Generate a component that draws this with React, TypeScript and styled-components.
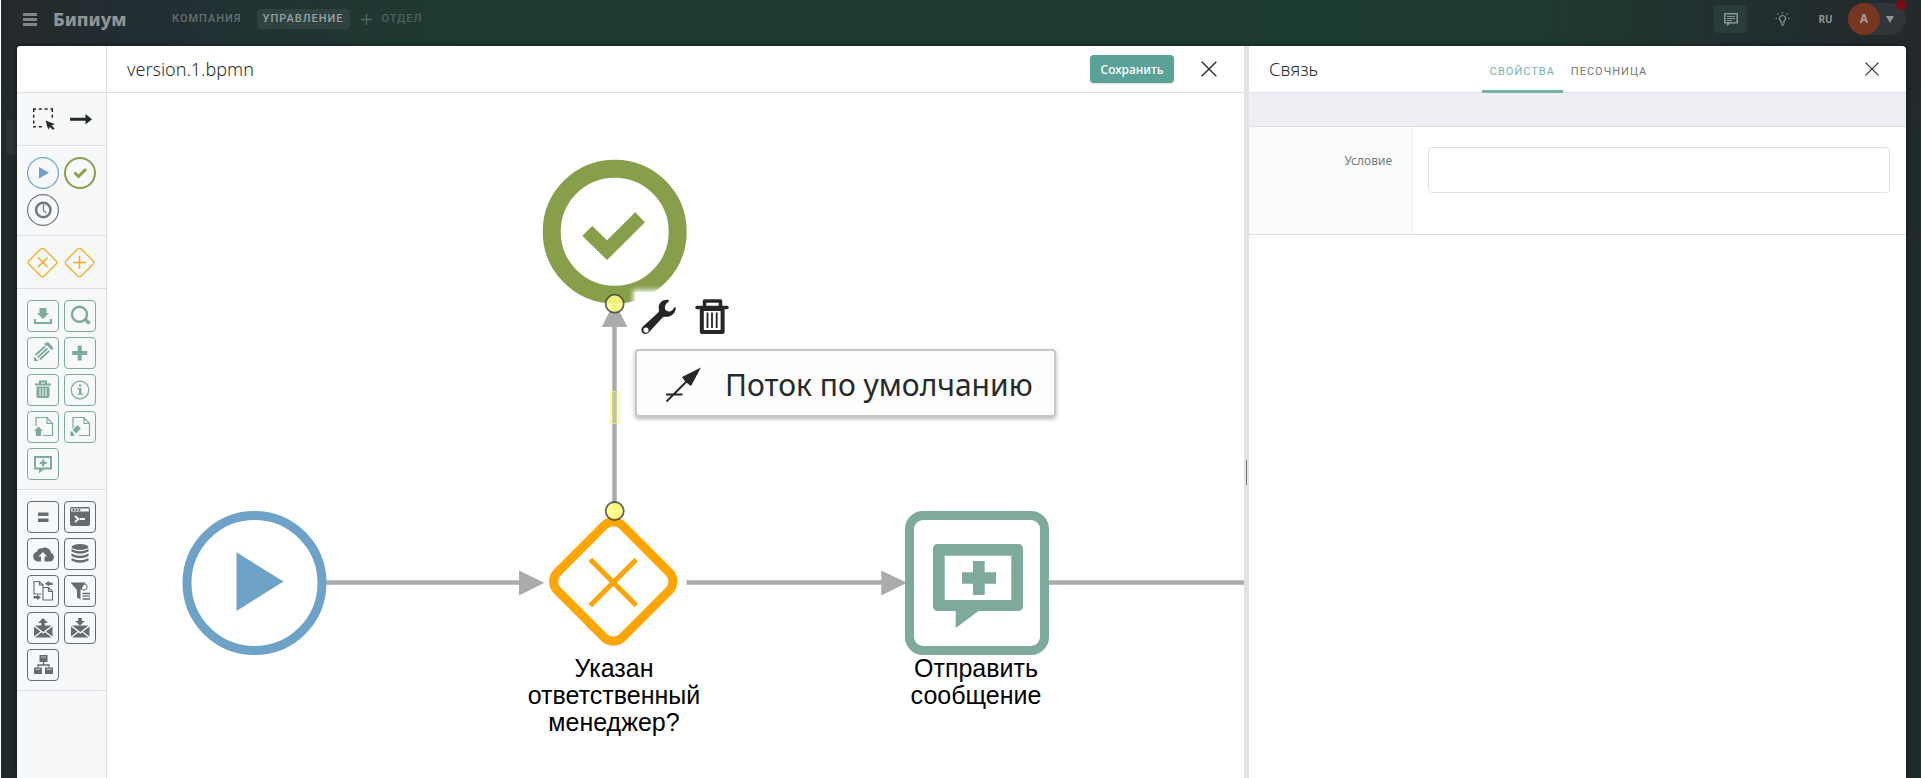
import React from "react";
import styled, { createGlobalStyle } from "styled-components";

const GlobalStyle = createGlobalStyle`
  *, *::before, *::after { box-sizing: border-box; }
  body { margin: 0; background: #fff; color: #2b2f31; font-family: "Noto Sans", sans-serif; }
  button, input { font-family: inherit; margin: 0; padding: 0; }
  button { background: none; border: 0; cursor: pointer; color: inherit; }
  svg { display: block; }
`;

const Page = styled.div`
  display: flex;
  flex-direction: column;
  min-height: 100vh;
  margin-left: 1px;
  position: relative;
  background: linear-gradient(90deg, #24292d 0, #223033 10%, #1e3b31 24%, #1e3d32 70%, #1f3a31 80%, #22302f 90%, #23282c 100%);
`;

const Backdrop = styled.div`
  position: absolute;
  inset: 60px 0 0 0;
  background: linear-gradient(180deg, rgba(32, 44, 44, 0), #202c2c 60px);
`;

const BackTile = styled.div`
  position: absolute;
  left: 5px;
  top: 120px;
  width: 20px;
  height: 35px;
  border-radius: 4px;
  background: #2c3437;
`;

const TopBar = styled.header`
  display: flex;
  align-items: center;
  height: 46px;
  padding: 0 15px 8px 22px;
  color: #8c9493;
`;

const MenuButton = styled.button`
  display: flex;
  color: #7f8686;
`;

const Logo = styled.a`
  margin: 0 39px 0 16px;
  width: 74px;
  font: 800 18px/24px "Noto Sans", sans-serif;
  color: #8f9495;
  text-decoration: none;
`;

const Nav = styled.nav`
  display: flex;
  align-items: center;
`;

const NavLink = styled.a<{ $active?: boolean }>`
  padding: 0 6px;
  margin-right: 9px;
  height: 20px;
  border-radius: 4px;
  font-family: Roboto, "Noto Sans", sans-serif;
  font-size: 11px;
  line-height: 20px;
  font-weight: 500;
  letter-spacing: 1px;
  text-decoration: none;
  color: ${(p) => (p.$active ? "#9ba3a1" : "#66716f")};
  background: ${(p) => (p.$active ? "#2f4240" : "transparent")};
`;

const AddLink = styled(NavLink)`
  display: flex;
  align-items: center;
  gap: 10px;
  padding: 0 2px;
  color: #4f625d;
`;

const Tools = styled.div`
  display: flex;
  align-items: center;
  margin-left: auto;
  height: 38px;
`;

const ChatButton = styled.button`
  display: grid;
  place-items: center;
  width: 33px;
  height: 28px;
  border-radius: 4px;
  background: #2b3d3a;
`;

const HintButton = styled.button`
  margin-left: 28px;
`;

const Language = styled.button`
  width: 58px;
  padding-left: 13px;
  font-size: 10px;
  font-weight: 700;
  line-height: 16px;
`;

const Account = styled.button`
  position: relative;
  display: flex;
  align-items: center;
  gap: 6px;
  width: 58px;
  height: 32px;
  border-radius: 16px;
  background: #2f3538;
`;

const Avatar = styled.span`
  width: 32px;
  height: 32px;
  border-radius: 50%;
  background: #76361f;
  color: #a59c98;
  font-size: 12px;
  font-weight: 700;
  line-height: 32px;
`;

const Alert = styled.span`
  position: absolute;
  top: -3px;
  right: 0;
  width: 10px;
  height: 10px;
  border-radius: 50%;
  background: #7d0c10;
`;

const Modal = styled.main`
  position: relative;
  flex: 1;
  display: flex;
  margin: 0 15px 0 16px;
  border-radius: 4px 4px 0 0;
  overflow: hidden;
  background: #fff;
  box-shadow: 0 0 6px rgba(0, 0, 0, 0.5);
`;

const Palette = styled.aside`
  flex: 0 0 90px;
  border-right: 1px solid #dcdee1;
  background: #f7f8fa;
`;

const PaletteHead = styled.div`
  height: 47px;
  border-bottom: 1px solid #dcdee1;
  background: #fff;
`;

const Group = styled.div<{ $color: string }>`
  display: flex;
  flex-wrap: wrap;
  gap: 5px;
  padding: 11px 10px 9px;
  border-bottom: 1px solid #dcdee1;
  color: ${(p) => p.$color};
`;

const Tool = styled.button<{ $shape?: "box" | "bare" }>`
  display: grid;
  place-items: center;
  width: 32px;
  height: 32px;
  border-radius: 4px;
  border: ${(p) => (p.$shape === "box" ? "1px solid currentColor" : "0")};
`;

const Editor = styled.section`
  flex: 1 1 0;
  min-width: 0;
  display: flex;
  flex-direction: column;
`;

const Head = styled.div`
  display: flex;
  align-items: center;
  height: 47px;
  padding: 0 27px 0 20px;
  border-bottom: 1px solid #dcdee1;
`;

const Title = styled.h1`
  margin: 0;
  font-size: 18px;
  line-height: 24px;
  font-weight: 300;
`;

const Save = styled.button`
  margin-left: auto;
  margin-right: 27px;
  width: 84px;
  height: 28px;
  border-radius: 4px;
  background: #5ba198;
  color: #fff;
  font-size: 12px;
  font-weight: 500;
  box-shadow: 0 1px 2px rgba(0, 0, 0, 0.15);
`;

const Canvas = styled.div`
  position: relative;
  flex: 1;
  min-height: 640px;
  overflow: hidden;
`;

const Diagram = styled.svg`
  position: absolute;
  left: 0;
  top: 0;
  width: 100%;
  height: 100%;
`;

const NodeLabel = styled.div<{ $x: number; $y: number }>`
  position: absolute;
  left: ${(p) => p.$x}px;
  top: ${(p) => p.$y}px;
  width: 200px;
  font: 25px/27px "Liberation Sans", Arial, sans-serif;
  color: #000;
  text-align: center;
`;

const ContextPad = styled.div`
  position: absolute;
  left: 528px;
  top: 199px;
  display: flex;
  gap: 6px;
`;

const PadButton = styled.button`
  display: grid;
  place-items: center;
  width: 47px;
  height: 49px;
  background: rgba(255, 255, 255, 0.98);
  box-shadow: 0 0 5px 2px #fff;
  color: #262626;
`;

const Popup = styled.div`
  position: absolute;
  left: 528px;
  top: 256px;
  border: 2px solid #c8c8c8;
  border-radius: 4px;
  background: #fdfdfd;
  box-shadow: 0 2px 4px rgba(0, 0, 0, 0.3);
`;

const PopupItem = styled.button`
  display: flex;
  align-items: center;
  gap: 23px;
  height: 64px;
  width: 417px;
  padding: 3px 0 0 28px;
  font-size: 30px;
  line-height: 40px;
  color: #262a2c;
  white-space: nowrap;
`;

const Splitter = styled.div`
  display: flex;
  align-items: center;
  flex: 0 0 5px;
  padding: 0 2px 0 2px;
  background: #e3e3e3;
`;

const Grip = styled.span`
  width: 1px;
  height: 25px;
  margin-bottom: -120px;
  background: #777;
`;

const Panel = styled.section`
  flex: 0 0 657px;
  display: flex;
  flex-direction: column;
`;

const PanelHead = styled(Head)`
  justify-content: space-between;
`;

const Tabs = styled.div`
  display: flex;
  align-self: stretch;
  margin-right: 46px;
`;

const Tab = styled.button<{ $active?: boolean }>`
  height: 47px;
  padding: 6px 8px 0;
  border-bottom: 3px solid ${(p) => (p.$active ? "#79b1a8" : "transparent")};
  font-family: Roboto, "Noto Sans", sans-serif;
  font-size: 11px;
  letter-spacing: 1px;
  color: ${(p) => (p.$active ? "#7ab2a9" : "#777")};
`;

const SubBar = styled.div`
  height: 34px;
  border-bottom: 1px solid #dcdee1;
  background: #eeeff4;
`;

const Field = styled.div`
  display: flex;
  height: 108px;
  border-bottom: 1px solid #dcdee1;
`;

const FieldLabel = styled.label`
  width: 164px;
  padding: 25px 20px 0 0;
  border-right: 1px solid #eeeff3;
  background: #fafbfd;
  font-size: 12px;
  line-height: 18px;
  text-align: right;
  color: #777;
`;

const FieldInput = styled.input`
  flex: 1;
  height: 46px;
  margin: 20px 16px 0 15px;
  padding: 0 10px;
  border: 1px solid #e2e2e4;
  border-radius: 4px;
  font-size: 14px;
`;

const Cross = ({ size = 14 }: { size?: number }) => (
  <svg width={size} height={size} viewBox="0 0 14 14" fill="none" stroke="#333" strokeWidth="1.3">
    <path d="M.6.6l12.8 12.8M13.4.6L.6 13.4" />
  </svg>
);

const Icon = ({ children }: { children: React.ReactNode }) => (
  <svg width="30" height="30" viewBox="1 1 30 30" fill="currentColor">{children}</svg>
);

const BigIcon = ({ children }: { children: React.ReactNode }) => (
  <svg width="32" height="32" viewBox="0 0 32 32" fill="currentColor">{children}</svg>
);

type Item = { name: string; art: React.ReactNode; color?: string };

const line = { fill: "none", stroke: "currentColor" } as const;

const toolItems: Item[] = [
  {
    name: "Выделение",
    art: (
      <>
        <path {...line} strokeWidth="1.500" strokeDasharray="3 2.800" d="M6 5h20M6.700 5v18.500M25.300 5v11M6 22.800h10" />
        <path d="M18.500 16.500l9.300 3.500-3.200 1.500 3 3-1.600 1.500-3-3-1.800 2.500z" />
      </>
    ),
  },
  { name: "Связь", art: <path d="M6 13.800h15.500V10l6.500 5.300-6.500 5.300V16.800H6z" /> },
];

const eventItems: Item[] = [
  {
    name: "Начало",
    color: "#6ea3c7",
    art: (
      <>
        <circle {...line} cx="16" cy="16" r="15.400" strokeWidth="1.200" />
        <path d="M12 10l10 5.800-10 5.800z" />
      </>
    ),
  },
  {
    name: "Завершение",
    color: "#879f4a",
    art: (
      <>
        <circle {...line} cx="16" cy="16" r="15" strokeWidth="2" />
        <path {...line} strokeWidth="3" d="M10.500 15.500l4 4 7.500-7.500" />
      </>
    ),
  },
  {
    name: "Таймер",
    color: "#75787a",
    art: (
      <>
        <circle {...line} cx="16" cy="16" r="15.400" strokeWidth="1.200" />
        <circle {...line} cx="16.300" cy="16" r="7.200" strokeWidth="2.500" />
        <path {...line} strokeWidth="1.300" d="M16.500 10.500v6l2.800 2.500" />
      </>
    ),
  },
];

const gatewayFrame = (
  <rect {...line} x="4.700" y="4.700" width="21.600" height="21.600" rx="2.500" strokeWidth="1.200" transform="rotate(45 15.500 15.500)" />
);

const gatewayItems: Item[] = [
  { name: "Исключающий шлюз", art: <>{gatewayFrame}<path {...line} strokeWidth="1.500" d="M11 10.500l9.500 9.500M20.500 10.500L11 20" /></> },
  { name: "Параллельный шлюз", art: <>{gatewayFrame}<path {...line} strokeWidth="1.500" d="M15.500 9v13M9 15.500h13" /></> },
];

const trashArt = (
  <>
    <path {...line} strokeWidth="2" d="M8 10.500h16M13 10V7.500h6V10" />
    <path d="M9.500 12.500h13V22q0 2-2 2h-9q-2 0-2-2z" />
    <path d="M13 14v8M16 14v8M19 14v8" stroke="#f7f8fa" strokeWidth="1" />
  </>
);

const recordItems: Item[] = [
  {
    name: "Получить запись",
    art: (
      <>
        <path d="M12.500 8h7v5h2.500l-6 6-6-6h2.500z" />
        <path {...line} strokeWidth="2" d="M8 19v4h16v-4" />
      </>
    ),
  },
  {
    name: "Найти запись",
    art: (
      <>
        <circle {...line} cx="15.500" cy="14.300" r="7.500" strokeWidth="2.400" />
        <path {...line} strokeWidth="3.500" d="M20.500 19l5 4.500" />
      </>
    ),
  },
  {
    name: "Изменить запись",
    art: (
      <>
        <path d="M7 19.500V24h4.500z" />
        <path {...line} strokeWidth="1.800" d="M8.500 18L18 9.500M10.800 20.300L20.300 11.500M12.800 22.500l9.500-8.700" />
        <path {...line} strokeWidth="3" d="M18 8l1.500-1h1.500l3.500 4-.5 1.500" />
      </>
    ),
  },
  { name: "Создать запись", art: <path d="M13.700 8.500h4v5.500h5.500v4h-5.500v5.500h-4V18H8.200v-4h5.500z" /> },
  { name: "Удалить запись", art: trashArt },
  {
    name: "Информация",
    art: (
      <>
        <circle {...line} cx="16" cy="16" r="8.800" strokeWidth="1.200" />
        <path d="M15 10.500h2.500v2H15zM13.500 14h4v5.500h1.500v1.300h-5.500v-1.300H15v-4.200h-1.500z" />
      </>
    ),
  },
  {
    name: "Загрузить файл",
    art: (
      <>
        <path {...line} strokeWidth="1.200" d="M9 15V6.500h11l5.500 6V24.500H16M20 6.500v6h5.500" />
        <path d="M11.500 15.500l4.500 4.500h-2v5H9v-5H7z" />
      </>
    ),
  },
  {
    name: "Изменить файл",
    art: (
      <>
        <path {...line} strokeWidth="1.200" d="M9 17V6.500h11l5.500 6V24.500H15M20 6.500v6h5.500" />
        <path d="M6.500 25v-4l1-1 3 3.500-1 1.500zM8.500 19l5-5 3.500 3.500-5 5z" />
      </>
    ),
  },
  {
    name: "Отправить сообщение",
    art: (
      <>
        <path {...line} strokeWidth="2" d="M8 9h16v11.500H8z" />
        <path d="M12 21v4.500l5-4.500zM15 11.500h2.300v2.300h2.300V16h-2.300v2.300H15V16h-2.300v-2.200H15z" />
      </>
    ),
  },
];

const envelope = (
  <>
    <path d="M7 14.500l6.500 5L7 24.500zM25.500 14.500l-6.500 5 6.500 5z" />
    <path d="M8 13.500h16.500L16.300 20zM8 25.500l6.500-5.200 1.800 1.400 1.800-1.400 6.400 5.200z" />
  </>
);

const serviceItems: Item[] = [
  { name: "Присвоить", art: <path d="M11 11.500h10.500v3.500H11zM11 17.500h10.500V21H11z" /> },
  {
    name: "Скрипт",
    art: (
      <>
        <path fillRule="evenodd" d="M8 6h16q2 0 2 2v15q0 2-2 2H8q-2 0-2-2V8q0-2 2-2zm-.800 1.500v3h17.600v-3z" />
        <path {...line} strokeWidth="1.800" d="M8.500 9h9" strokeDasharray="1.800 1.200" />
        <path fill="none" stroke="#f7f8fa" strokeWidth="2" d="M11 15l3.500 3-3.500 3M16 18h5" />
      </>
    ),
  },
  {
    name: "Облако",
    art: (
      <path fillRule="evenodd" d="M12.500 23.500h-1.500a5 5 0 0 1-1.200-9.800 4.200 4.200 0 0 1 5-3.300 6.200 6.200 0 0 1 9.300 4.600 4.400 4.400 0 0 1-1.600 8.500h-5v-5h2.500l-4-4.500-4.500 4.500h2.500v5z" />
    ),
  },
  {
    name: "База данных",
    art: (
      <>
        <ellipse cx="16" cy="9" rx="8.500" ry="3" />
        <path d="M7.500 11q8.500 4.500 17 0v2.500q-8.500 4.500-17 0zM7.500 15.500q8.500 4.500 17 0V18q-8.500 4.500-17 0zM7.500 20q8.500 4.500 17 0v2.500q-8.500 4.500-17 0z" />
      </>
    ),
  },
  {
    name: "Преобразование файла",
    art: (
      <>
        <path {...line} strokeWidth="1.100" d="M14.500 19H7V6.500h5.500l3.500 3.500v2M12.500 6.500V10H16M16 12.500h5.500l4 4v8.500H16zM21.500 12.500v4h4" />
        <path d="M18 8.500l4-2.500v1.500h3.500V10H22v1.500zM14 22.500L10 25v-1.500H6.500V21H10v-1.500z" />
      </>
    ),
  },
  {
    name: "Фильтр",
    art: (
      <>
        <path d="M6.500 7.500h15l-5 7.500v9.500l-3.500-2V15z" />
        <circle {...line} cx="20" cy="12" r="3.200" strokeWidth="1" />
        <path {...line} strokeWidth="1.300" d="M18.500 18.500h7.500M18.500 21.200h7.500M18.500 24h7.500" />
      </>
    ),
  },
  { name: "Отправить письмо", art: <>{envelope}<path d="M16 6l5 5h-3.200v4h-3.600v-4H11z" /></> },
  { name: "Получить письмо", art: <>{envelope}<path d="M16 13.500l-5-4.500h3.200V6h3.600v3H21z" /></> },
  {
    name: "Подпроцесс",
    art: (
      <>
        <path d="M12.500 6h8v7h-8zM7 18.500h8V25H7zM18 18.500h8V25h-8z" />
        <path {...line} strokeWidth="1.300" d="M16.500 13v3M11 18.500V16h11v2.500" />
        <path d="M14 8h5M8.500 20.300h5M19.500 20.300h5" stroke="#f7f8fa" strokeWidth=".7" />
      </>
    ),
  },
];

const PaletteGroup = ({ items, color, boxed }: { items: Item[]; color: string; boxed?: boolean }) => (
  <Group $color={color}>
    {items.map((item) => (
      <Tool key={item.name} $shape={boxed ? "box" : "bare"} aria-label={item.name}>
        {boxed ? <Icon>{item.art}</Icon> : <BigIcon><g color={item.color}>{item.art}</g></BigIcon>}
      </Tool>
    ))}
  </Group>
);

const Process = () => (
  <Diagram aria-hidden="true">
    <g transform="translate(-107 -93)">
      <g stroke="#a9abad" strokeWidth="4.500">
        <path d="M326 582.500h195M686.500 582.500h197M1049 582.500h2000M614.500 511V325" />
      </g>
      <path fill="#a9abad" d="M519 570.500l25.500 12.300-25.500 12.700zM881.300 570.500l25.500 12.300-25.500 12.700zM602 327l12.500-25 12.700 25z" />
      <circle cx="254.500" cy="583" r="67.500" fill="#fff" stroke="#6ea3c7" strokeWidth="9" />
      <path fill="#6ea3c7" d="M236.500 552.300l47 29.200-47 29.500z" />
      <circle cx="614.700" cy="231.700" r="63" fill="#fff" stroke="#879f4a" strokeWidth="18" />
      <path fill="#879f4a" d="M582.300 235.700l10-9.700 14.700 14.300 28.300-28 9.700 10-38 37.700z" />
      <rect x="567.300" y="535.500" width="92" height="92" rx="13" fill="#fff" stroke="#ffa500" strokeWidth="9" transform="rotate(45 613.300 581.500)" />
      <path stroke="#ffa500" strokeWidth="5" d="M590.300 559.500l46 46M636.300 559.500l-46 46" />
      <rect x="909.500" y="515.500" width="135" height="135" rx="13.500" fill="#fff" stroke="#7eaa9d" strokeWidth="9" />
      <path fill="#7eaa9d" fillRule="evenodd" d="M938 544h80q5 0 5 5v57q0 5-5 5h-39.500l-22.800 17v-17H938q-5 0-5-5v-57q0-5 5-5zm6.700 11.700V600h66.600v-44.300zM973 561h11.700v11.300H996v11.400h-11.300V595H973v-11.300h-11V572.300h11z" />
      <path fill="#a9abad" d="M602 327l12.500-25 12.700 25z" />
      <rect x="610.500" y="391.500" width="8" height="32" fill="#ffff80" fillOpacity=".3" stroke="#ffff80" strokeOpacity=".6" />
      <circle cx="614.700" cy="303.700" r="9" fill="#ffff80" fillOpacity=".85" stroke="#333" strokeOpacity=".75" strokeWidth="1.800" />
      <circle cx="614.700" cy="511" r="9" fill="#ffff80" fillOpacity=".9" stroke="#333" strokeOpacity=".75" strokeWidth="1.800" />
    </g>
  </Diagram>
);

export default function App() {
  return (
    <>
      <GlobalStyle />
      <Page>
        <Backdrop />
        <BackTile />
        <TopBar>
          <MenuButton aria-label="Меню">
            <svg width="14" height="13" viewBox="0 0 14 13" fill="currentColor"><path d="M0 0h14v3H0zM0 5h14v3H0zM0 10h14v3H0z" /></svg>
          </MenuButton>
          <Logo href="#">Бипиум</Logo>
          <Nav>
            <NavLink href="#company">КОМПАНИЯ</NavLink>
            <NavLink href="#management" $active>УПРАВЛЕНИЕ</NavLink>
            <AddLink href="#add">
              <svg width="11" height="11" viewBox="0 0 11 11" stroke="currentColor" strokeWidth="1.500"><path d="M5.500 0v11M0 5.500h11" /></svg>
              ОТДЕЛ
            </AddLink>
          </Nav>
          <Tools>
            <ChatButton aria-label="Сообщения">
              <svg width="14" height="13" viewBox="0 0 14 13" fill="none" stroke="currentColor">
                <path strokeWidth="1.600" d="M.8.8h12.400v9H.8z" />
                <path strokeWidth="1.200" d="M3 3.500h8M3 5.500h8M3 7.500h5" />
                <path fill="currentColor" stroke="none" d="M3 10h4l-4 3z" />
              </svg>
            </ChatButton>
            <HintButton aria-label="Подсказки">
              <svg width="15" height="14" viewBox="0 0 15 14" fill="none" stroke="currentColor" strokeWidth="1.200">
                <path d="M7.500 3.500a3 3 0 0 1 1.500 5.600V11H6V9.100A3 3 0 0 1 7.500 3.500zM6 12.800h3M7.500 0v1.500M.5 6.500H2M13 6.500h1.500M2.500 1.500l1 1M12.500 1.500l-1 1" />
              </svg>
            </HintButton>
            <Language>RU</Language>
            <Account aria-label="Профиль">
              <Avatar>A</Avatar>
              <svg width="8" height="7" viewBox="0 0 8 7" fill="currentColor"><path d="M0 0h8L4 7z" /></svg>
              <Alert />
            </Account>
          </Tools>
        </TopBar>
        <Modal>
          <Palette>
            <PaletteHead />
            <PaletteGroup items={toolItems} color="#262a2a" />
            <PaletteGroup items={eventItems} color="#75787a" />
            <PaletteGroup items={gatewayItems} color="#fba81f" />
            <PaletteGroup items={recordItems} color="#7eaa9d" boxed />
            <PaletteGroup items={serviceItems} color="#666b70" boxed />
          </Palette>
          <Editor>
            <Head>
              <Title>version.1.bpmn</Title>
              <Save>Сохранить</Save>
              <button aria-label="Закрыть редактор"><Cross size={16} /></button>
            </Head>
            <Canvas>
              <Process />
              <NodeLabel $x={407} $y={562}>Указан<br />ответственный<br />менеджер?</NodeLabel>
              <NodeLabel $x={769} $y={562}>Отправить<br />сообщение</NodeLabel>
              <ContextPad>
                <PadButton aria-label="Настроить">
                  <svg width="36" height="36" viewBox="0 0 36 36" fill="currentColor">
                    <path fillRule="evenodd" d="M26 .8c-5.500 0-9.500 4.800-8 10.200.2 1-.1 1.800-.8 2.600L2 27.500c-2 2-2.200 4.500-.6 6.300 1.700 1.800 4.800 1.600 6.600-.5L21.500 18.500c.8-.8 1.500-1 2.600-.8 5.700 1 10.700-3.500 10.700-9.200-.8-.6-1.500-.2-2 .6-1 2.300-3 3.700-5.200 3.400-2.800-.3-4.300-2.700-3.500-5.400.5-1.900 1.600-3 3.300-4C28.500 2 27.800.8 26 .8zM5 28.500a2.600 2.600 0 1 1 0 5.200 2.600 2.600 0 0 1 0-5.200z" />
                  </svg>
                </PadButton>
                <PadButton aria-label="Удалить">
                  <svg width="34" height="37" viewBox="0 0 34 37" fill="none" stroke="currentColor">
                    <path strokeWidth="4" strokeLinejoin="round" d="M6.800 11h20.800v23H6.800z" />
                    <path strokeWidth="3.500" strokeLinecap="round" strokeLinejoin="round" d="M2 9.500h30M9.500 9V3h16v6" />
                    <path strokeWidth="1.800" d="M12.500 14.500v15.500M17 14.500v15.500M21.700 14.500v15.500" />
                  </svg>
                </PadButton>
              </ContextPad>
              <Popup>
                <PopupItem>
                  <svg width="37" height="36" viewBox="0 0 37 36" fill="#262626" stroke="#262626">
                    <path fill="none" strokeWidth="1.800" d="M1.500 34.500L22 14M1 27.500h16.500" />
                    <path stroke="none" d="M36 .5L17 10l3.500 5 5.500 4z" />
                  </svg>
                  Поток по умолчанию
                </PopupItem>
              </Popup>
            </Canvas>
          </Editor>
          <Splitter role="separator"><Grip /></Splitter>
          <Panel>
            <PanelHead>
              <Title as="h2">Связь</Title>
              <Tabs>
                <Tab $active>СВОЙСТВА</Tab>
                <Tab>ПЕСОЧНИЦА</Tab>
              </Tabs>
              <button aria-label="Закрыть панель"><Cross /></button>
            </PanelHead>
            <SubBar />
            <Field>
              <FieldLabel htmlFor="condition">Условие</FieldLabel>
              <FieldInput id="condition" type="text" />
            </Field>
          </Panel>
        </Modal>
      </Page>
    </>
  );
}
